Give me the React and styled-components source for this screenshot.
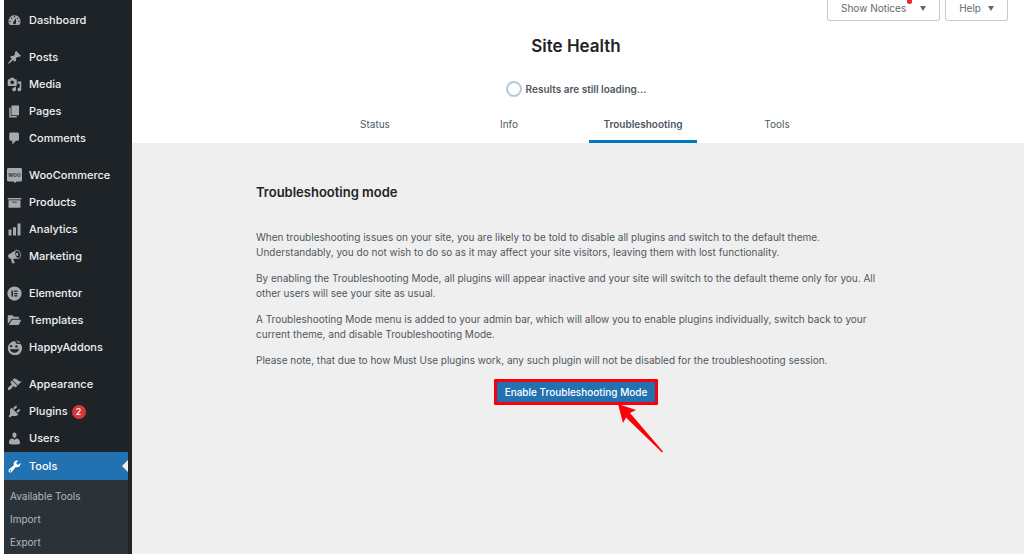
import React from 'react';
import styled, { createGlobalStyle } from 'styled-components'

const GlobalStyle = createGlobalStyle`
  * {
    box-sizing: border-box;
  }

  body {
    margin: 0;
    background: #efefef;
    color: #50575e;
    font-family: Inter, "Liberation Sans", sans-serif;
    font-size: 10px;
    line-height: 15px;
  }
`

const Page = styled.div`
  display: flex;
  min-height: 100vh;
  padding-left: 4px;
  background: linear-gradient(to right, #fff 4px, #efefef 4px);
`

const Sidebar = styled.nav`
  flex: 0 0 128px;
  padding: 7px 4px 0 0;
  background: #1d2327;
`

const MenuGroup = styled.ul`
  margin: 0 0 10px;
  padding: 0;
  list-style: none;

  &:last-child {
    margin-bottom: 0;
  }
`

const MenuLink = styled.a`
  position: relative;
  display: flex;
  align-items: center;
  gap: 7px;
  height: ${({ $active }) => ($active ? '28px' : '27px')};
  padding-left: 3px;
  background: ${({ $active }) => ($active ? '#2271b1' : 'transparent')};
  color: ${({ $active }) => ($active ? '#fff' : '#f0f0f1')};
  font-size: 11px;
  font-weight: 500;
  text-decoration: none;

  svg {
    flex: none;
    width: 15px;
    height: 15px;
    fill: ${({ $active }) => ($active ? '#fff' : '#a7aaad')};
  }
`

const ActiveArrow = styled.span`
  position: absolute;
  top: 8px;
  right: 0;
  border: 6px solid transparent;
  border-left: 0;
  border-right-color: #efefef;
`

const Count = styled.span`
  min-width: 14px;
  height: 14px;
  margin-left: -3px;
  border-radius: 7px;
  background: #d63638;
  color: #fff;
  font-size: 9px;
  line-height: 14px;
  text-align: center;
`

const SubMenu = styled.ul`
  margin: 0;
  padding: 5px 0;
  background: #2c3338;
  list-style: none;
`

const SubLink = styled.a`
  display: block;
  padding: 4px 6px;
  color: #b4b8bc;
  font-size: 10px;
  line-height: 15px;
  text-decoration: none;
`

const Main = styled.main`
  flex: 1;
  min-width: 0;
`

const Header = styled.header`
  height: 143px;
  padding-right: 4px;
  background: #fff;
  text-align: center;
`

const ScreenMeta = styled.div`
  display: flex;
  justify-content: flex-end;
  gap: 5px;
  height: 21px;
  padding-right: 12px;
`

const MetaButton = styled.button`
  position: relative;
  display: flex;
  align-items: center;
  gap: ${({ $wide }) => ($wide ? '14px' : '7px')};
  padding: 0 13px 4px;
  border: 1px solid #c9cbce;
  border-top: 0;
  border-radius: 0 0 3px 3px;
  background: #fff;
  color: #646970;
  font: inherit;

  svg {
    width: 6px;
    height: 5px;
    fill: currentColor;
  }
`

const NoticeDot = styled.span`
  position: absolute;
  top: 0;
  right: 27px;
  width: 5px;
  height: 4px;
  border-radius: 0 0 3px 3px;
  background: #e32b2b;
`

const Title = styled.h1`
  margin: 0;
  padding-top: 13px;
  color: #1d2327;
  font-size: 17px;
  font-weight: 600;
  line-height: 24px;
`

const Progress = styled.div`
  display: flex;
  align-items: center;
  justify-content: center;
  gap: 4px;
  height: 16px;
  margin-top: 23px;
  font-weight: 600;
`

const Ring = styled.span`
  width: 16px;
  height: 16px;
  border: 2px solid #b6cad9;
  border-radius: 50%;
`

const Tabs = styled.nav`
  display: grid;
  grid-template-columns: repeat(4, 108px);
  justify-content: center;
  column-gap: 26px;
  margin-top: 7px;
`

const Tab = styled.a`
  height: 39px;
  padding-top: 13px;
  border-bottom: 3px solid ${({ $active }) => ($active ? '#007cba' : 'transparent')};
  color: #50575e;
  font-weight: ${({ $active }) => ($active ? 600 : 400)};
  text-decoration: none;
`

const Content = styled.section`
  max-width: 644px;
  margin: 0 auto;
  padding: 40px 4px 0 0;

  p {
    margin: 0 0 11px;
  }
`

const SectionTitle = styled.h2`
  margin: 0 0 29px;
  color: #1d2327;
  font-size: 13px;
  font-weight: 600;
  line-height: 18px;
`

const Action = styled.div`
  position: relative;
  width: max-content;
  margin: 0 auto;
`

const PrimaryButton = styled.button`
  display: block;
  height: 26px;
  padding: 0 8px;
  border: 3px solid #fb0007;
  border-radius: 1px;
  background: #2271b1;
  color: #fff;
  font: inherit;
  font-weight: 500;
`

const Pointer = styled.svg`
  position: absolute;
  top: 25px;
  left: 123px;
  width: 48px;
  height: 50px;
  fill: #fb0007;
`

const icons = {
  dashboard: <path d="M3.76 16h12.48A7.998 7.998 0 0010 3a7.998 7.998 0 00-6.24 13zM10 4c.55 0 1 .45 1 1s-.45 1-1 1-1-.45-1-1 .45-1 1-1zM6 6c.55 0 1 .45 1 1s-.45 1-1 1-1-.45-1-1 .45-1 1-1zm8 0c.55 0 1 .45 1 1s-.45 1-1 1-1-.45-1-1 .45-1 1-1zm-5.37 5.55L12 7v6c0 1.1-.9 2-2 2s-2-.9-2-2c0-.57.24-1.08.63-1.45zM4 10c.55 0 1 .45 1 1s-.45 1-1 1-1-.45-1-1 .45-1 1-1zm12 0c.55 0 1 .45 1 1s-.45 1-1 1-1-.45-1-1 .45-1 1-1z" />,
  posts: <path d="M10.44 3.02l1.82-1.82 6.36 6.35-1.83 1.82c-1.05-.68-2.48-.57-3.41.36l-.75.75c-.92.93-1.04 2.35-.35 3.41l-1.83 1.82-2.41-2.41-2.8 2.79c-.42.42-3.38 2.71-3.8 2.29s1.86-3.39 2.28-3.81l2.79-2.79L4.1 9.36l1.83-1.82c1.05.69 2.48.57 3.4-.36l.75-.75c.93-.92 1.05-2.35.36-3.41z" />,
  media: <path d="M13 11V4c0-.55-.45-1-1-1h-1.67L9 1H5L3.67 3H2c-.55 0-1 .45-1 1v7c0 .55.45 1 1 1h10c.55 0 1-.45 1-1zM7 4.5c1.38 0 2.5 1.12 2.5 2.5S8.38 9.5 7 9.5 4.5 8.38 4.5 7 5.62 4.5 7 4.5zM14 6h5v10.5c0 1.38-1.12 2.5-2.5 2.5S14 17.88 14 16.5s1.12-2.5 2.5-2.5c.17 0 .34.02.5.05V9h-3V6zm-4 8.05V13h2v3.5c0 1.38-1.12 2.5-2.5 2.5S7 17.88 7 16.5 8.12 14 9.5 14c.17 0 .34.02.5.05z" />,
  pages: <path d="M6 15V2h10v13H6zm-1 1h8v2H3V5h2v11z" />,
  comments: <path d="M5 2h9c1.1 0 2 .9 2 2v7c0 1.1-.9 2-2 2h-2l-5 5v-5H5c-1.1 0-2-.9-2-2V4c0-1.1.9-2 2-2z" />,
  woo: (
    <>
      <path d="M2 0h16c1.200 0 2 .8 2 2v14c0 1.200-.8 2-2 2h-5.500l-1.500 2-2.500-2H2c-1.200 0-2-.8-2-2V2c0-1.200.8-2 2-2z" />
      <text x="10" y="12" fontSize="8" fontWeight="700" textAnchor="middle" fill="#3c4247">woo</text>
    </>
  ),
  products: <path d="M19 4v2H1V4h18zM2 7h16v10H2V7zm11 3V9H7v1h6z" />,
  analytics: <path d="M18 18V2h-4v16h4zm-6 0V7H8v11h4zm-6 0v-8H2v8h4z" />,
  marketing: <path d="M18.150 5.940c.46 1.620.38 3.220-.02 4.480-.42 1.280-1.260 2.180-2.300 2.480-.16.06-.26.06-.4.06-.06.02-.12.02-.18.02-.06.02-.14.02-.22.02h-6.800l2.220 5.500c.02.14-.06.26-.14.34-.08.1-.24.16-.34.16H6.950c-.1 0-.26-.06-.34-.16-.08-.08-.16-.2-.14-.34l-1-5.500H4.250l-.02-.02c-.5.06-1.080-.18-1.540-.62s-.88-1.080-1.060-1.880c-.24-.8-.2-1.560-.02-2.200.18-.62.58-1.080 1.060-1.300l.02-.02 9-5.400c.1-.06.18-.1.24-.16.06-.04.14-.08.24-.12.16-.08.28-.12.5-.18 1.040-.3 2.240.1 3.220.98s1.840 2.240 2.260 3.860zm-2.580 5.980h-.02c.4-.1.74-.34 1.040-.7.58-.7.86-1.760.86-3.040 0-.64-.1-1.300-.28-1.980-.34-1.360-1.020-2.500-1.780-3.240s-1.680-1.100-2.460-.88c-.82.22-1.400.96-1.700 2-.32 1.040-.28 2.360.06 3.720.38 1.360 1 2.500 1.800 3.240.78.74 1.620 1.100 2.480.88zm-2.540-7.080c.22-.04.42-.02.62.04.38.16.76.48 1.020 1s.42 1.200.42 1.780c0 .3-.04.56-.12.8-.18.48-.44.84-.86.94-.34.1-.8-.06-1.140-.4s-.64-.86-.78-1.500c-.18-.62-.12-1.240.02-1.720s.48-.84.82-.94z" />,
  elementor: <path fillRule="evenodd" d="M10 .5a9.500 9.500 0 100 19 9.500 9.500 0 000-19zM6 6h2v8H6zM9.500 6H14v1.700H9.500zM9.500 9.200H14v1.700H9.500zM9.500 12.400H14V14H9.500z" />,
  templates: <path d="M1 4c0-.6.4-1 1-1h5l2 2h6c.6 0 1 .4 1 1v1.500H6L3.500 12 1 14zM6.800 9H19l-3 6.300c-.3.500-.7.700-1.200.7H2.500z" />,
  happy: (
    <>
      <path fillRule="evenodd" d="M11 1.500l1 3.200 3 .6 3-.3a9.500 9.500 0 11-7-3.500zM5.500 6.500a1.600 1.600 0 100 3.200 1.600 1.600 0 000-3.200zm7 .5a1.600 1.600 0 100 3.200 1.600 1.600 0 000-3.200zM4 11.500c.5 3.500 3 5.500 6 5.500s5.500-2 6-5.500c-4 1.300-8 1.300-12 0z" />
      <path d="M12.500 0l1.300 3 3.700.8-.5-1.800-2.200-.5z" />
    </>
  ),
  appearance: <path d="M14.480 11.060L7.410 3.990l1.500-1.500c.5-.56 2.300-.47 3.510.32 1.210.8 1.430 1.280 2.910 2.100 1.180.64 2.450 1.260 4.450.85zm-.71.71L6.700 4.700 4.930 6.470c-.39.39-.39 1.020 0 1.410l1.060 1.060c.39.39.39 1.030 0 1.420-.6.6-1.430 1.110-2.210 1.690-.35.26-.7.53-1.010.84C1.430 14.230.4 16.080 1.400 17.070c.99 1 2.840-.03 4.180-1.360.31-.31.58-.66.85-1.020.57-.78 1.080-1.610 1.690-2.210.39-.39 1.020-.39 1.410 0l1.060 1.060c.39.39 1.020.39 1.410 0z" />,
  plugins: <path d="M13.110 4.360L9.870 7.600 8 5.730l3.240-3.240c.35-.34 1.050-.2 1.560.32.52.51.66 1.210.31 1.550zm-8 1.770l.91-1.120 9.010 9.010-1.190.84c-.71.71-2.630 1.160-3.820 1.160H6.140L4.900 17.260c-.59.59-1.540.59-2.120 0-.59-.58-.59-1.530 0-2.120l1.240-1.240v-3.880c0-1.130.4-3.190 1.090-3.890zm7.260 3.970l3.240-3.240c.34-.35 1.040-.21 1.550.31.52.51.66 1.210.31 1.550l-3.240 3.250z" />,
  users: <path d="M10 9.250c-2.270 0-2.730-3.440-2.730-3.440C7 4.020 7.820 2 9.970 2c2.160 0 2.980 2.020 2.710 3.810 0 0-.41 3.440-2.680 3.440zm0 2.570L12.720 10c2.390 0 4.520 2.330 4.520 4.530v2.490s-3.650 1.130-7.240 1.130c-3.650 0-7.240-1.130-7.240-1.130v-2.490c0-2.250 1.940-4.480 4.470-4.480z" />,
  tools: <path d="M16.680 9.770c-1.340 1.340-3.300 1.670-4.950.99l-5.410 6.520c-.99.99-2.590.99-3.580 0s-.99-2.590 0-3.570l6.520-5.420c-.68-1.650-.35-3.610.99-4.950 1.280-1.280 3.120-1.620 4.720-1.060l-2.890 2.890 2.820 2.820 2.860-2.870c.53 1.580.18 3.390-1.080 4.650zM3.810 16.210c.4.39 1.040.39 1.430 0 .4-.4.4-1.040 0-1.430-.39-.4-1.030-.4-1.430 0-.39.39-.39 1.030 0 1.430z" />,
}

const menu = [
  [{ label: 'Dashboard', icon: 'dashboard' }],
  [
    { label: 'Posts', icon: 'posts' },
    { label: 'Media', icon: 'media' },
    { label: 'Pages', icon: 'pages' },
    { label: 'Comments', icon: 'comments' },
  ],
  [
    { label: 'WooCommerce', icon: 'woo' },
    { label: 'Products', icon: 'products' },
    { label: 'Analytics', icon: 'analytics' },
    { label: 'Marketing', icon: 'marketing' },
  ],
  [
    { label: 'Elementor', icon: 'elementor' },
    { label: 'Templates', icon: 'templates' },
    { label: 'HappyAddons', icon: 'happy' },
  ],
  [
    { label: 'Appearance', icon: 'appearance' },
    { label: 'Plugins', icon: 'plugins', count: 2 },
    { label: 'Users', icon: 'users' },
    { label: 'Tools', icon: 'tools', active: true, children: ['Available Tools', 'Import', 'Export'] },
  ],
]

const tabs = ['Status', 'Info', 'Troubleshooting', 'Tools']

const MenuItem = ({ item }) => (
  <li>
    <MenuLink href="#" $active={item.active}>
      <svg viewBox="0 0 20 20" aria-hidden="true">{icons[item.icon]}</svg>
      {item.label}
      {item.count && <Count>{item.count}</Count>}
      {item.active && <ActiveArrow />}
    </MenuLink>
    {item.children && (
      <SubMenu>
        {item.children.map((label) => (
          <li key={label}><SubLink href="#">{label}</SubLink></li>
        ))}
      </SubMenu>
    )}
  </li>
)

const Caret = () => (
  <svg viewBox="0 0 6 5" aria-hidden="true"><path d="M0 0h6L3 5z" /></svg>
)

const App = () => {
  return (
    <>
      <GlobalStyle />
      <Page>
        <Sidebar>
          {menu.map((group) => (
            <MenuGroup key={group[0].label}>
              {group.map((item) => <MenuItem key={item.label} item={item} />)}
            </MenuGroup>
          ))}
        </Sidebar>
        <Main>
          <Header>
            <ScreenMeta>
              <MetaButton type="button" $wide>Show Notices<NoticeDot /><Caret /></MetaButton>
              <MetaButton type="button">Help<Caret /></MetaButton>
            </ScreenMeta>
            <Title>Site Health</Title>
            <Progress><Ring />Results are still loading...</Progress>
            <Tabs>
              {tabs.map((tab) => (
                <Tab key={tab} href="#" $active={tab === 'Troubleshooting'}>{tab}</Tab>
              ))}
            </Tabs>
          </Header>
          <Content>
            <SectionTitle>Troubleshooting mode</SectionTitle>
            <p>
              When troubleshooting issues on your site, you are likely to be told to disable all plugins and switch to the default theme.
              Understandably, you do not wish to do so as it may affect your site visitors, leaving them with lost functionality.
            </p>
            <p>
              By enabling the Troubleshooting Mode, all plugins will appear inactive and your site will switch to the default theme only for you. All
              other users will see your site as usual.
            </p>
            <p>
              A Troubleshooting Mode menu is added to your admin bar, which will allow you to enable plugins individually, switch back to your
              current theme, and disable Troubleshooting Mode.
            </p>
            <p>
              Please note, that due to how Must Use plugins work, any such plugin will not be disabled for the troubleshooting session.
            </p>
            <Action>
              <PrimaryButton type="button">Enable Troubleshooting Mode</PrimaryButton>
              <Pointer viewBox="0 0 48 50" aria-hidden="true">
                <path d="M1 0l18 6-6 3 33 38.500-1 1L9 13.500 6 19z" />
              </Pointer>
            </Action>
          </Content>
        </Main>
      </Page>
    </>
  )
}

export default App;
